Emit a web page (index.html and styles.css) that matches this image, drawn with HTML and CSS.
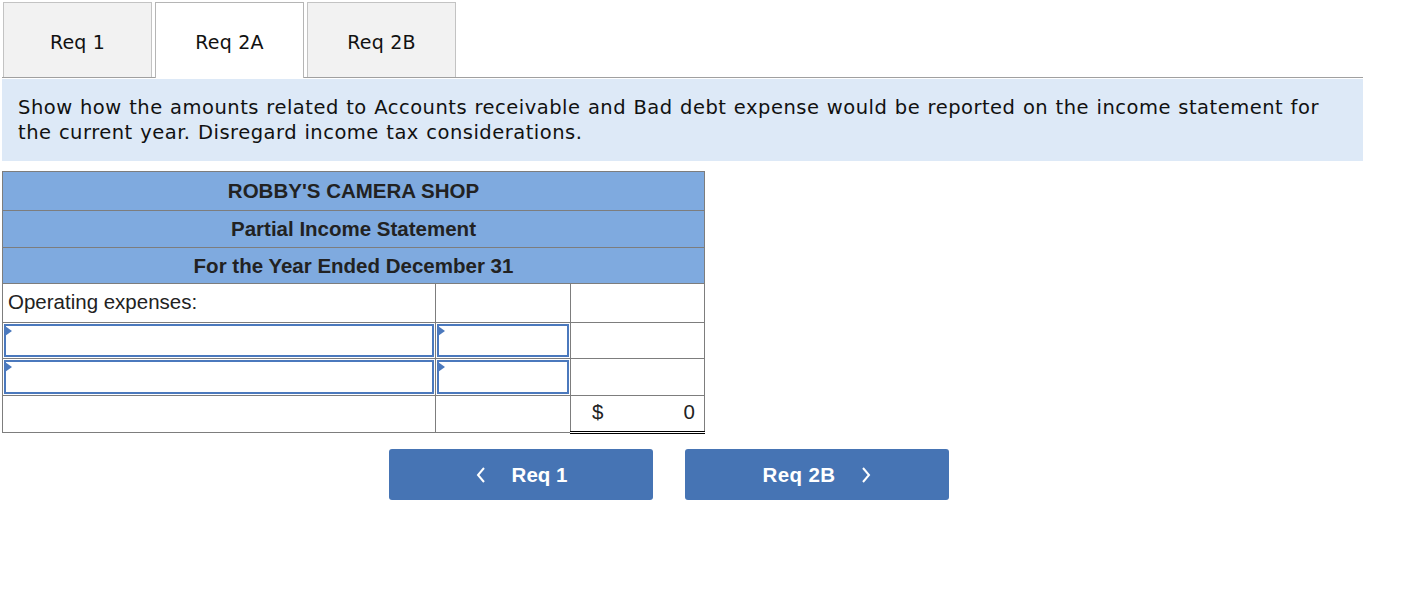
FILE: index.html
```html
<!DOCTYPE html>
<html>
<head>
<meta charset="utf-8">
<link rel="stylesheet" href="styles.css">
</head>
<body>
<div class="page">
  <div class="tabs">
    <div class="tab">Req 1</div>
    <div class="tab active">Req 2A</div>
    <div class="tab">Req 2B</div>
  </div>
  <div class="instructions">Show how the amounts related to Accounts receivable and Bad debt expense would be reported on the income statement for the current year. Disregard income tax considerations.</div>
  <table class="stmt">
    <tr class="head"><td colspan="3">ROBBY'S CAMERA SHOP</td></tr>
    <tr class="head"><td colspan="3">Partial Income Statement</td></tr>
    <tr class="head"><td colspan="3">For the Year Ended December 31</td></tr>
    <tr class="r1"><td class="label">Operating expenses:</td><td></td><td></td></tr>
    <tr class="r2"><td class="inp"><div class="box"><span class="tri"></span></div></td><td class="inp"><div class="box"><span class="tri"></span></div></td><td></td></tr>
    <tr class="r3"><td class="inp"><div class="box"><span class="tri"></span></div></td><td class="inp"><div class="box"><span class="tri"></span></div></td><td></td></tr>
    <tr class="r4"><td></td><td></td><td class="total"><span>$</span><span>0</span></td></tr>
  </table>
  <div class="nav">
    <button class="btn"><svg class="chev" width="12" height="18" viewBox="0 0 12 18"><path d="M9 2 L3 9 L9 16" fill="none" stroke="#fff" stroke-width="2"/></svg><span class="btxt left">Req 1</span></button>
    <button class="btn"><span class="btxt right">Req 2B</span><svg class="chev" width="12" height="18" viewBox="0 0 12 18"><path d="M3 2 L9 9 L3 16" fill="none" stroke="#fff" stroke-width="2"/></svg></button>
  </div>
</div>
</body>
</html>
```
FILE: styles.css
```css
* { box-sizing: border-box; }
body { margin: 0; background: #fff; }
.page { padding: 2px 0 0 2px; width: 1363px; }
.tabs { display: flex; gap: 3px; padding-left: 1px; border-bottom: 1px solid #a0a0a0; height: 76px; }
.tab {
  width: 149px; height: 75px;
  background: #f2f2f2; border: 1px solid #c3c3c3; border-bottom: none;
  font-family: "DejaVu Sans", Verdana, sans-serif; font-size: 19px; letter-spacing: 0.2px; color: #111;
  display: flex; align-items: center; justify-content: center;
  padding-top: 3px;
}
.tab.active { background: #fff; height: 76px; border-color: #b5b5b5; position: relative; z-index: 1; }
.instructions {
  margin-top: 1px;
  background: #dde9f7;
  padding: 16px 16px 14px 16px;
  font-family: "DejaVu Sans", Verdana, sans-serif; font-size: 19.5px; letter-spacing: 0.5px; word-spacing: 0.7px; line-height: 25px; color: #111;
  height: 82px;
}
.stmt {
  margin-top: 10px;
  border-collapse: collapse;
  width: 703px;
  font-family: "Liberation Sans", Arial, sans-serif; font-size: 20.5px; color: #222;
}
.stmt td { border: 1px solid #7d7d7d; padding: 0; }
.stmt td:nth-child(1) { width: 433px; }
.stmt td:nth-child(2) { width: 135px; }
.head td { background: #7faadf; font-weight: bold; text-align: center; color: #222; }
.head:nth-child(1) td { height: 39px; padding-bottom: 1px; }
.head:nth-child(2) td { height: 37px; }
.head:nth-child(3) td { height: 36px; }
.r1 td { height: 39px; }
.r1 .label { padding: 0 0 3px 5px; }
.r2 td { height: 36px; }
.r3 td { height: 37px; }
.r4 td { height: 37px; }
.stmt td.inp { padding: 1px 1px 1px 1px; }
.box { position: relative; height: 100%; border: 2px solid #4b79bd; background: #fff; }
.tri { position: absolute; left: -1px; top: 0; width: 0; height: 0; border-top: 5px solid transparent; border-bottom: 5px solid transparent; border-left: 7px solid #4b79bd; }
.stmt td.total { border-top: 1px solid #000; border-bottom: 3px double #000; padding: 0 9px 3px 21px; }
.total span:first-child { float: left; }
.total span:last-child { float: right; }
.nav { display: flex; gap: 32px; margin: 15px 0 0 387px; }
.btn {
  width: 264px; height: 51px; background: #4674b4; border: none; border-radius: 3px;
  color: #fff; font-family: "Liberation Sans", Arial, sans-serif; font-weight: bold; font-size: 20.5px;
  display: flex; align-items: center; justify-content: center; padding: 0;
}
.btxt.left { margin-left: 25px; }
.btxt.right { margin-right: 24px; letter-spacing: 0.4px; }
.chev { display: block; }
```
